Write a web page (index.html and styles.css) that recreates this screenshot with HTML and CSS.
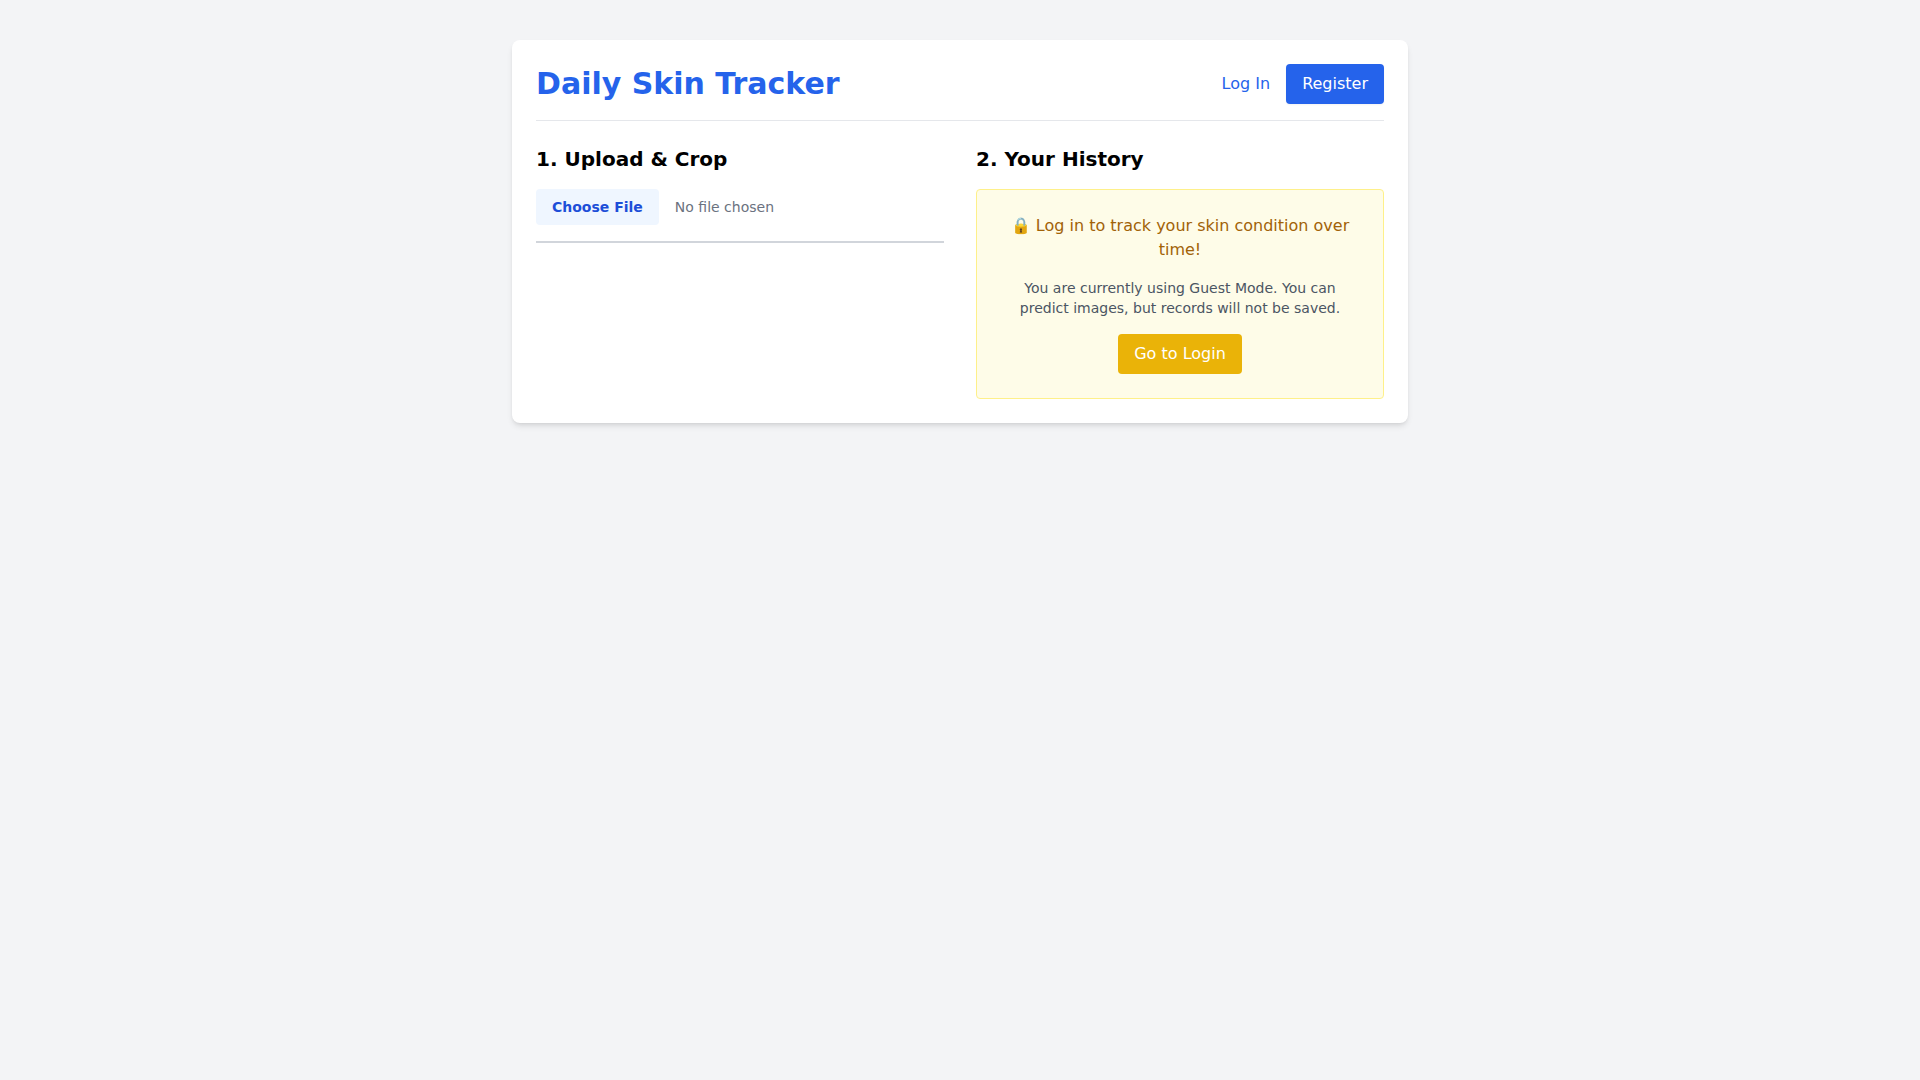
FILE: index.html
```html
<!DOCTYPE html>
<html lang="en">
<head>
<meta charset="utf-8">
<title>Daily Skin Tracker</title>
<link rel="stylesheet" href="styles.css">
</head>
<body>
<main class="card">
  <header class="header">
    <h1 class="title">Daily Skin Tracker</h1>
    <nav class="nav">
      <a class="nav-link" href="#">Log In</a>
      <a class="btn btn-blue" href="#">Register</a>
    </nav>
  </header>
  <div class="columns">
    <section>
      <h2 class="section-title">1. Upload &amp; Crop</h2>
      <input class="file-input" type="file">
      <div class="crop-area"></div>
    </section>
    <section>
      <h2 class="section-title">2. Your History</h2>
      <div class="notice">
        <p class="notice-title">🔒 Log in to track your skin condition over time!</p>
        <p class="notice-text">You are currently using Guest Mode. You can predict images, but records will not be saved.</p>
        <a class="btn btn-yellow" href="#">Go to Login</a>
      </div>
    </section>
  </div>
</main>
</body>
</html>
```
FILE: styles.css
```css
* {
  box-sizing: border-box;
}

html {
  line-height: 1.5;
}

body {
  margin: 0;
  min-height: 100vh;
  padding-top: 40px;
  background: #f3f4f6;
  color: #000;
  font-family: "DejaVu Sans", sans-serif;
  font-size: 16px;
}

.card {
  width: 896px;
  margin: 0 auto;
  padding: 24px;
  background: #fff;
  border-radius: 8px;
  box-shadow: 0 4px 6px -1px rgba(0, 0, 0, 0.1), 0 2px 4px -2px rgba(0, 0, 0, 0.1);
}

.header {
  display: flex;
  align-items: center;
  justify-content: space-between;
  padding-bottom: 16px;
  margin-bottom: 24px;
  border-bottom: 1px solid #e5e7eb;
}

.title {
  margin: 0;
  font-size: 30px;
  line-height: 36px;
  font-weight: 700;
  color: #2563eb;
}

.nav {
  display: flex;
  align-items: center;
  gap: 16px;
}

.nav-link {
  color: #2563eb;
  text-decoration: none;
}

.btn {
  display: inline-block;
  padding: 8px 16px;
  border-radius: 4px;
  color: #fff;
  text-decoration: none;
}

.btn-blue {
  background: #2563eb;
  box-shadow: 0 1px 2px rgba(0, 0, 0, 0.05);
}

.btn-yellow {
  background: #eab308;
}

.columns {
  display: grid;
  grid-template-columns: 1fr 1fr;
  gap: 32px;
}

.section-title {
  margin: 0 0 16px;
  font-size: 20px;
  line-height: 28px;
  font-weight: 700;
}

.file-input {
  display: block;
  width: 100%;
  padding: 0;
  font-family: inherit;
  font-size: 14px;
  line-height: 20px;
  color: #6b7280;
}

.file-input::file-selector-button {
  margin-right: 16px;
  padding: 8px 16px;
  border: 0;
  border-radius: 4px;
  background: #eff6ff;
  color: #1d4ed8;
  font-family: inherit;
  font-size: 14px;
  line-height: 20px;
  font-weight: 600;
}

.crop-area {
  margin-top: 16px;
  border-top: 2px solid #d1d5db;
}

.notice {
  padding: 24px;
  text-align: center;
  background: #fefce8;
  border: 1px solid #fef08a;
  border-radius: 4px;
}

.notice-title {
  margin: 0 0 16px;
  color: #a16207;
}

.notice-text {
  margin: 0 0 16px;
  font-size: 14px;
  line-height: 20px;
  color: #4b5563;
}
```
